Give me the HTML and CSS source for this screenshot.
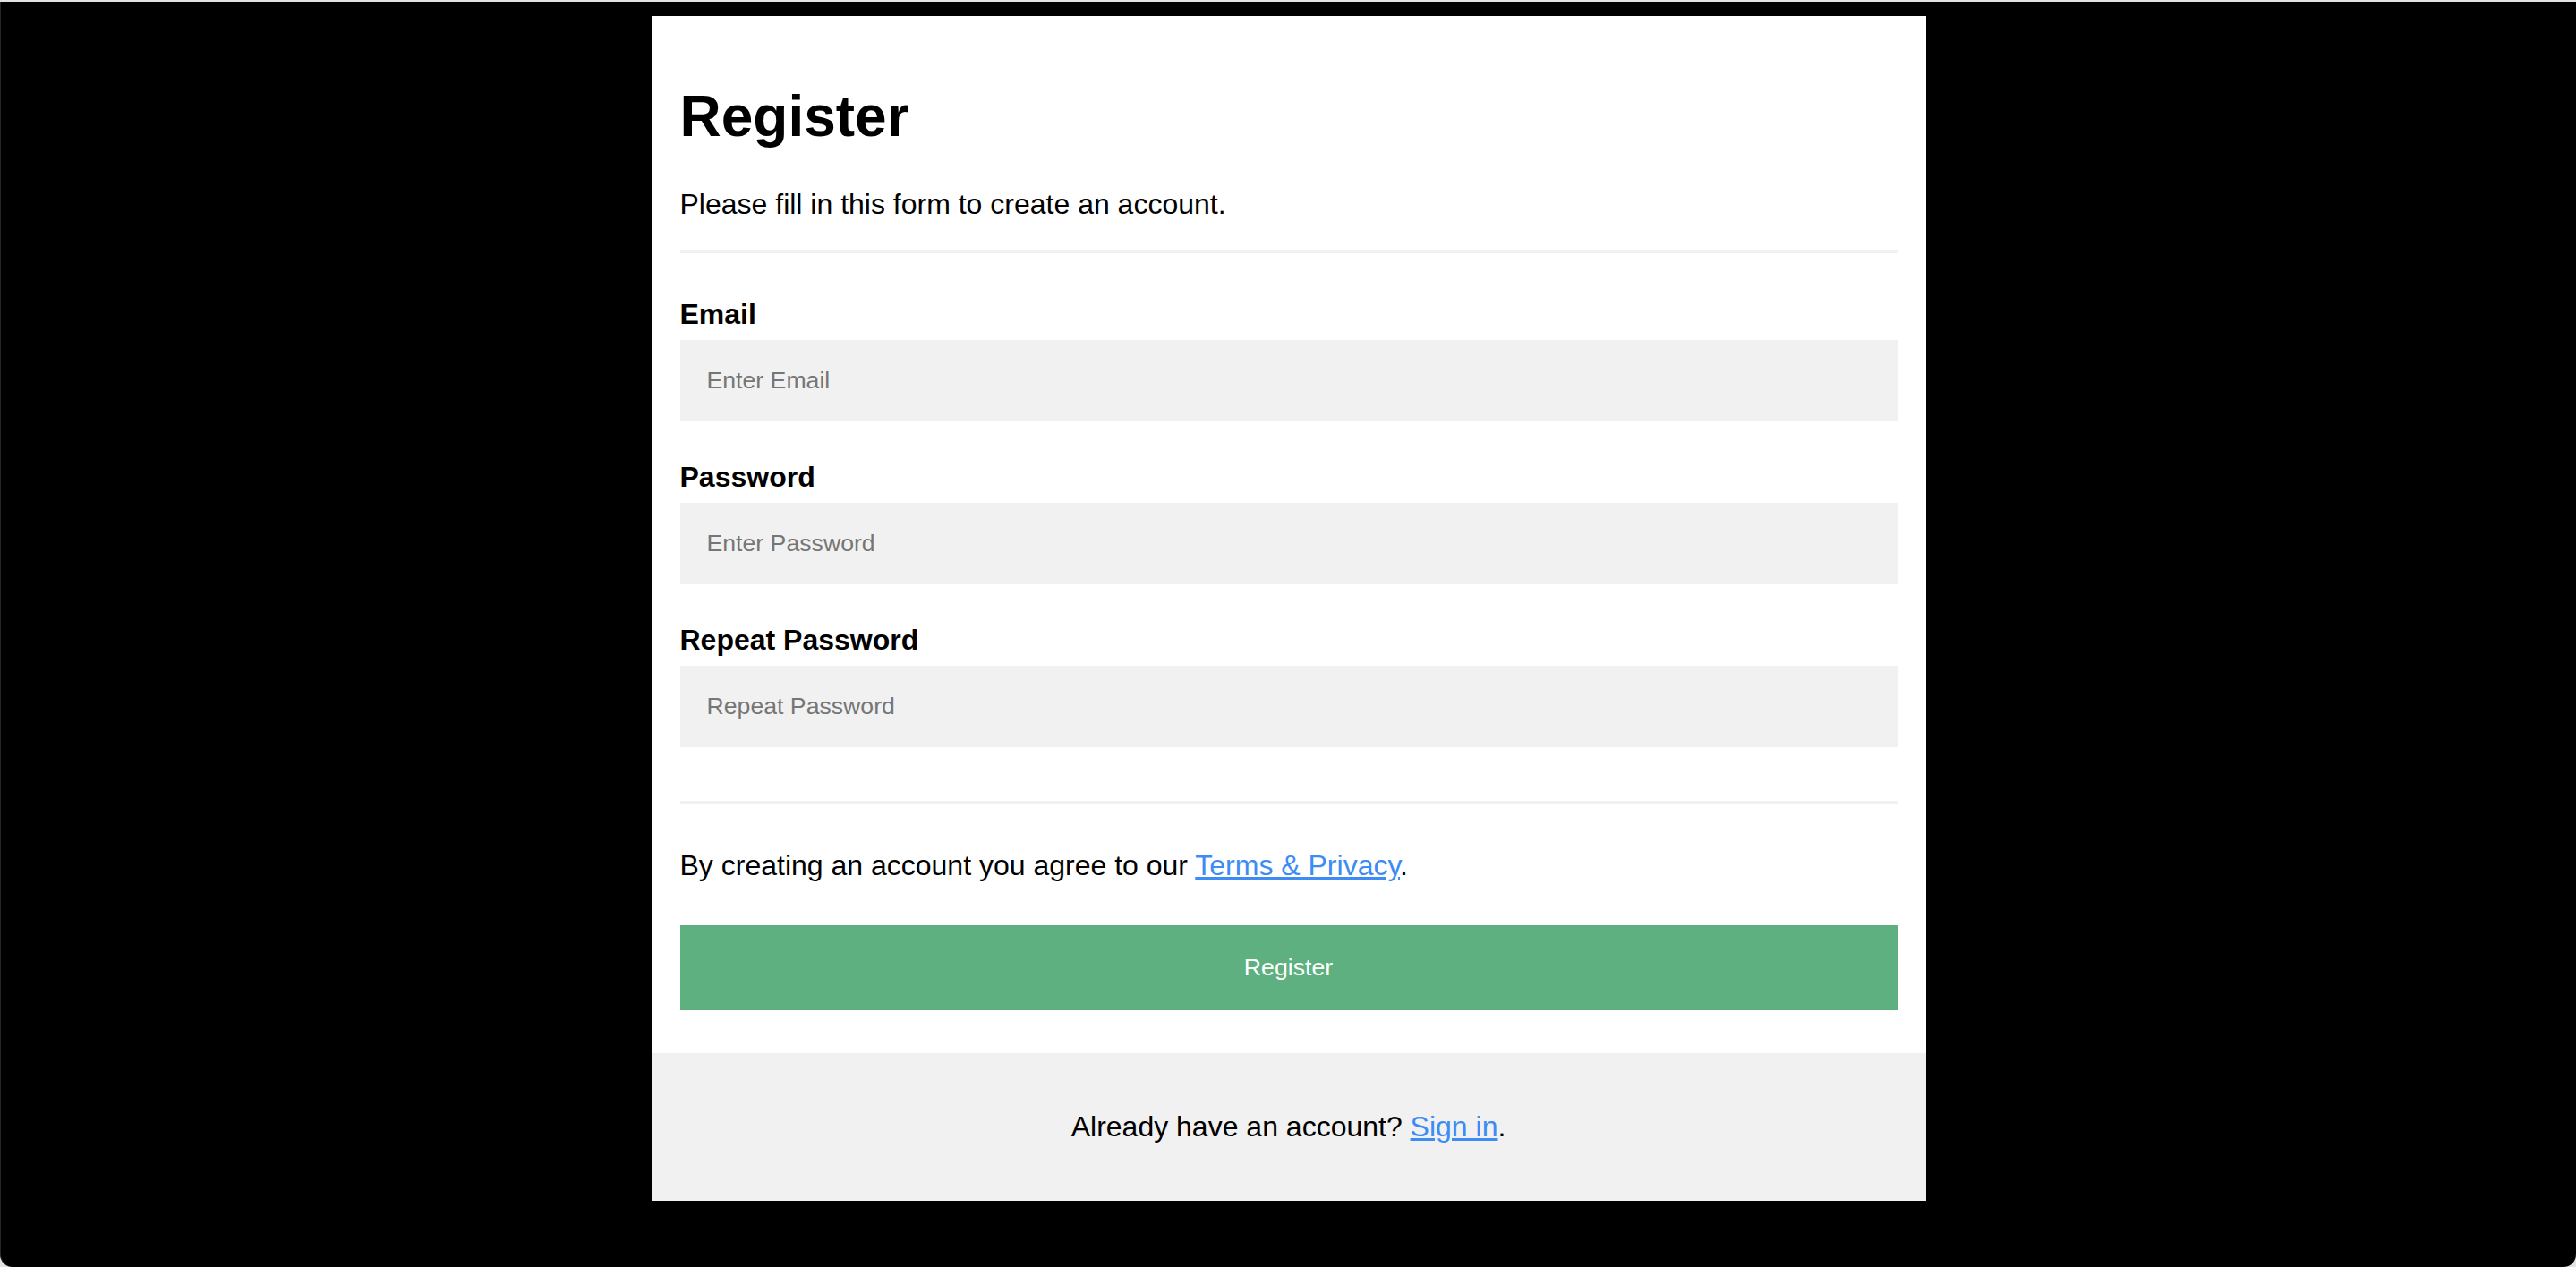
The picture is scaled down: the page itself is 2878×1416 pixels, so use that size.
FILE: index.html
```html
<!DOCTYPE html>
<html lang="en">
<head>
<meta charset="utf-8">
<title>Register</title>
<link rel="stylesheet" href="styles.css">
</head>
<body class="page">
<form class="form">
  <div class="container">
    <h1 class="title">Register</h1>
    <p class="text">Please fill in this form to create an account.</p>
    <hr class="rule">

    <label class="label" for="email"><b>Email</b></label>
    <input class="field" type="text" placeholder="Enter Email" name="email" id="email">

    <label class="label" for="psw"><b>Password</b></label>
    <input class="field" type="password" placeholder="Enter Password" name="psw" id="psw">

    <label class="label" for="psw-repeat"><b>Repeat Password</b></label>
    <input class="field" type="password" placeholder="Repeat Password" name="psw-repeat" id="psw-repeat">
    <hr class="rule">

    <p class="text">By creating an account you agree to our <a class="link" href="#">Terms &amp; Privacy</a>.</p>
    <button type="button" class="registerbtn">Register</button>
  </div>

  <div class="container signin">
    <p class="text">Already have an account? <a class="link" href="#">Sign in</a>.</p>
  </div>
</form>
</body>
</html>
```

FILE: styles.css
```css
* {
  box-sizing: border-box;
}

html {
  background: #e2e2e2;
}

.page {
  margin: 2px 0 0 0;
  padding: 16px 0;
  min-height: calc(100vh - 2px);
  background: #000;
  border-left: 1px solid #262626;
  border-radius: 0 0 14px 14px;
  font-family: "Liberation Sans", Arial, Helvetica, sans-serif;
  font-size: 32px;
  color: #000;
}

.form {
  width: 1424px;
  margin: 0 auto;
  background: #fff;
}

.container {
  padding: 32px;
}

.title {
  font-size: 64px;
  font-weight: bold;
  margin: 43px 0;
}

.text {
  margin: 32px 0;
}

.rule {
  border: 2px solid #f1f1f1;
  margin: 16px 0 50px 0;
}

.label b {
  font-weight: bold;
}

.field {
  width: 100%;
  padding: 30px;
  margin: 10px 0 44px 0;
  display: inline-block;
  border: none;
  background: #f1f1f1;
  font-family: "Liberation Sans", Arial, Helvetica, sans-serif;
  font-size: 26.667px;
  color: #000;
  outline: none;
}

.field::placeholder {
  color: #767676;
}

.registerbtn {
  display: inline-block;
  background-color: #5eb080;
  color: #fff;
  padding: 32px 40px;
  margin: 16px 0;
  border: none;
  width: 100%;
  font-family: "Liberation Sans", Arial, Helvetica, sans-serif;
  font-size: 26.667px;
  cursor: pointer;
}

.link {
  color: #3d8cf5;
}

.signin {
  background-color: #f1f1f1;
  text-align: center;
}
```
